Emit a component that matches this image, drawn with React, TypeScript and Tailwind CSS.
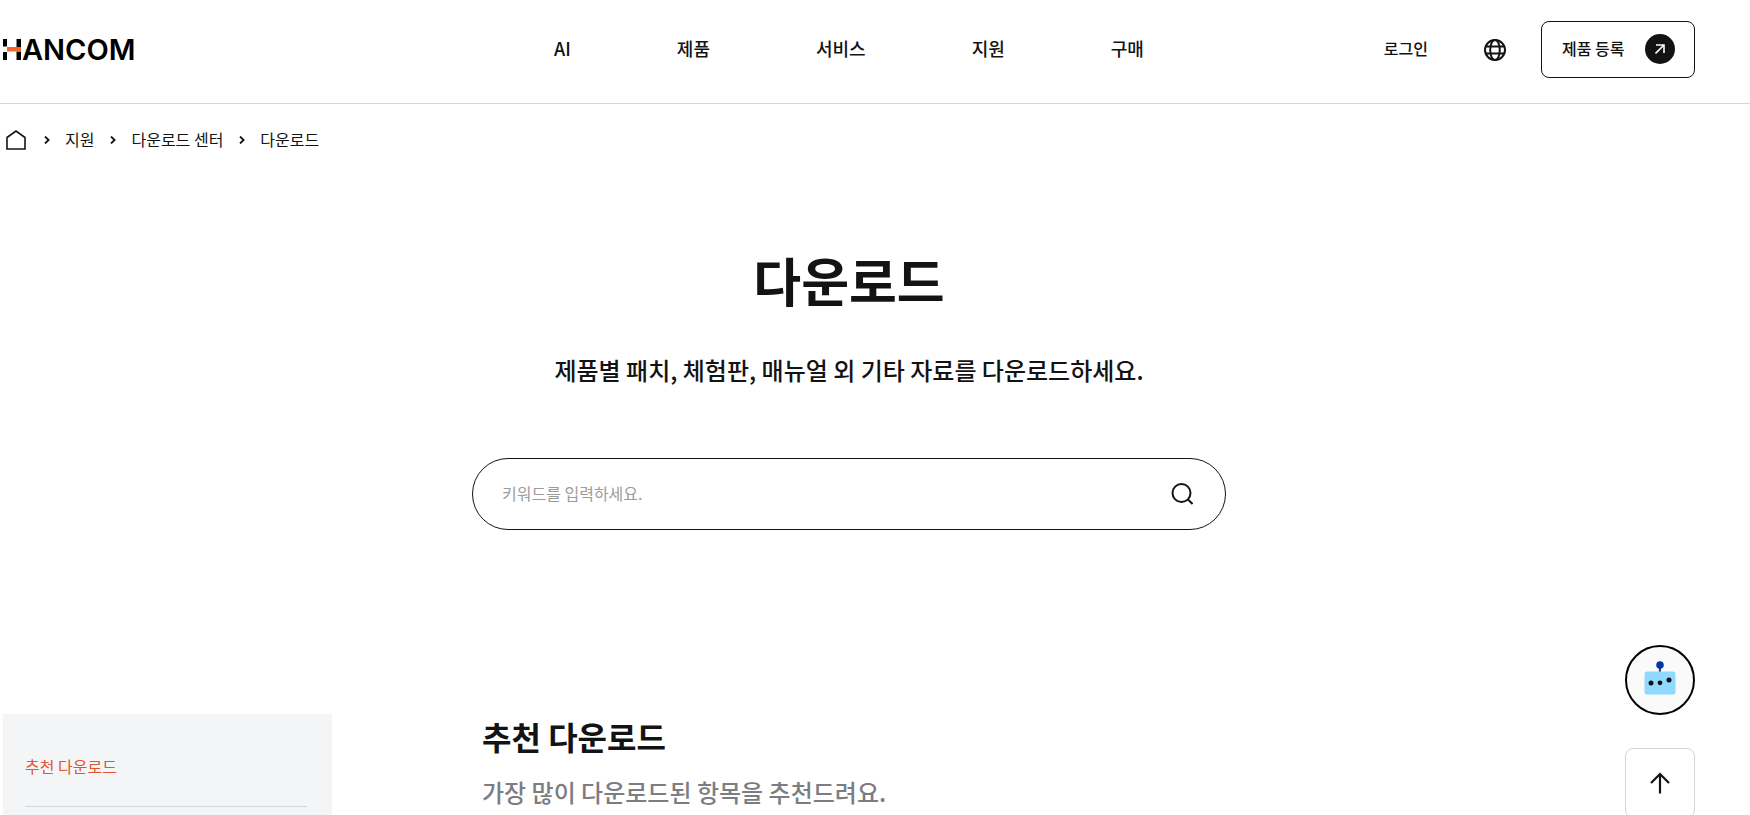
const NAV_ITEMS = ["AI", "제품", "서비스", "지원", "구매"];
const CRUMBS = ["지원", "다운로드 센터", "다운로드"];

function Logo() {
  return (
    <a href="#" aria-label="HANCOM" className="flex items-center">
      <svg width="18" height="21" viewBox="0 0 18 21">
        <path d="M0 0h4v7.5H0zM0 13h4v8H0zM13.5 0H18v8h-4.5zM13.5 12.5H18V21h-4.5z" fill="#000" />
        <path d="M4 8h14v4.5H4z" fill="#f26530" />
      </svg>
      <span className="ml-px font-[Inter] text-[29px] leading-none font-semibold text-black">ANCOM</span>
    </a>
  );
}

function GlobeIcon() {
  return (
    <svg width="22" height="22" viewBox="0 0 22 22" fill="none" stroke="#131313" strokeWidth="2">
      <circle cx="11" cy="11" r="10" />
      <ellipse cx="11" cy="11" rx="4.8" ry="10" />
      <path d="M2 7.5h18M2 14.5h18" />
    </svg>
  );
}

function RobotIcon() {
  return (
    <svg width="32" height="38" viewBox="0 0 32 38">
      <path d="M15.9 4v8" stroke="#0a35a0" strokeWidth="2" />
      <circle cx="16" cy="4" r="3.8" fill="#0a35a0" />
      <rect x="0.5" y="10.5" width="31" height="23" rx="2.5" fill="#8fd9ff" />
      <circle cx="7" cy="22" r="2.5" fill="#111" />
      <circle cx="16" cy="21.8" r="2.4" fill="#111" />
      <circle cx="25" cy="19" r="2.5" fill="#111" />
    </svg>
  );
}

function Header() {
  return (
    <header className="border-b border-[#d5d5d5]">
      <div className="grid h-[103px] grid-cols-[1fr_auto_1fr] items-center pr-[55px] pb-1 pl-[3px]">
        <Logo />
        <nav className="flex gap-[106px] pb-[3px] text-lg font-medium">
          {NAV_ITEMS.map((item) => (
            <a key={item} href="#">
              {item}
            </a>
          ))}
        </nav>
        <div className="flex items-center justify-end">
          <a href="#" className="pb-[3px] text-base font-medium">
            로그인
          </a>
          <button type="button" aria-label="언어 선택" className="mr-[35px] ml-14">
            <GlobeIcon />
          </button>
          <button
            type="button"
            className="flex h-[57px] w-[154px] items-center justify-between rounded-lg border border-[#131313] pr-[19px] pb-px pl-5 text-base font-medium"
          >
            <span className="pb-[2px]">제품 등록</span>
            <span className="flex size-[30px] items-center justify-center rounded-full bg-[#131313]">
              <svg width="10" height="10" viewBox="0 0 10 10" fill="none" stroke="#fff" strokeWidth="1.6">
                <path d="M0.5 9.5L9 1M1 1h8v8" />
              </svg>
            </span>
          </button>
        </div>
      </div>
    </header>
  );
}

function Breadcrumb() {
  return (
    <nav aria-label="breadcrumb" className="flex h-[72px] items-center pl-[6px] text-base">
      <a href="#" aria-label="홈" className="mr-[2px]">
        <svg width="20" height="20" viewBox="0 0 20 20" fill="none" stroke="#131313" strokeWidth="1.6">
          <path d="M1 7.5L10 1l9 6.5V19H1z" />
        </svg>
      </a>
      {CRUMBS.map((crumb) => (
        <span key={crumb} className="flex items-center">
          <svg className="mr-[15px] ml-4" width="6" height="8" viewBox="0 0 6 8" fill="none" stroke="#131313" strokeWidth="1.8">
            <path d="M1 0.5L4.6 4L1 7.5" />
          </svg>
          <a href="#" className="pb-[3px]">
            {crumb}
          </a>
        </span>
      ))}
    </nav>
  );
}

function Hero() {
  return (
    <section className="flex flex-col items-center pt-16 pr-[52px]">
      <h1 className="text-[52px] leading-[80px] font-bold">다운로드</h1>
      <p className="mt-8 text-2xl leading-9 font-medium">
        제품별 패치, 체험판, 매뉴얼 외 기타 자료를 다운로드하세요.
      </p>
      <form
        className="mt-[70px] flex h-[72px] w-full max-w-[754px] items-center rounded-full border border-[#131313] pr-8 pl-[29px]"
        onSubmit={(e) => e.preventDefault()}
      >
        <input
          type="search"
          aria-label="키워드 검색"
          placeholder="키워드를 입력하세요."
          className="min-w-0 flex-1 pb-[2px] text-base outline-none placeholder:text-[#9c9c9c]"
        />
        <button type="submit" aria-label="검색">
          <svg width="22" height="22" viewBox="0 0 22 22" fill="none" stroke="#131313" strokeWidth="2">
            <circle cx="10.5" cy="10" r="9" />
            <path d="M17 16.5l4.5 4.5" />
          </svg>
        </button>
      </form>
    </section>
  );
}

export default function App() {
  return (
    <div className="min-h-screen bg-white font-['Noto_Sans_CJK_KR',sans-serif] text-[#131313]">
      <Header />
      <Breadcrumb />
      <main>
        <Hero />
        <div className="mt-46 flex pl-[3px]">
          <aside className="w-[329px] bg-[#f4f5f7] pr-[25px] pb-2 pl-[22px]">
            <a href="#" className="flex h-[93px] items-center border-b border-[#d4d6d9] pt-3 text-base text-[#e1572f]">
              추천 다운로드
            </a>
          </aside>
          <section className="ml-[150px]">
            <h2 className="text-[32px] leading-[44px] font-bold">추천 다운로드</h2>
            <p className="mt-4 text-2xl leading-9 font-medium text-[#7c7d83]">
              가장 많이 다운로드된 항목을 추천드려요.
            </p>
          </section>
        </div>
      </main>

      {/* Floating buttons */}
      <div className="fixed right-[55px] -bottom-[3px] flex flex-col gap-[33px]">
        <button
          type="button"
          aria-label="챗봇"
          className="flex size-[70px] items-center justify-center rounded-full border-2 border-black bg-[#fafafa]"
        >
          <RobotIcon />
        </button>
        <button
          type="button"
          aria-label="맨 위로"
          className="flex size-[70px] items-center justify-center rounded-lg border border-[#d5d5d5] bg-white"
        >
          <svg width="20" height="22" viewBox="0 0 20 22" fill="none" stroke="#131313" strokeWidth="2.2">
            <path d="M10 21.5V2M1 11l9-9 9 9" />
          </svg>
        </button>
      </div>
    </div>
  );
}
